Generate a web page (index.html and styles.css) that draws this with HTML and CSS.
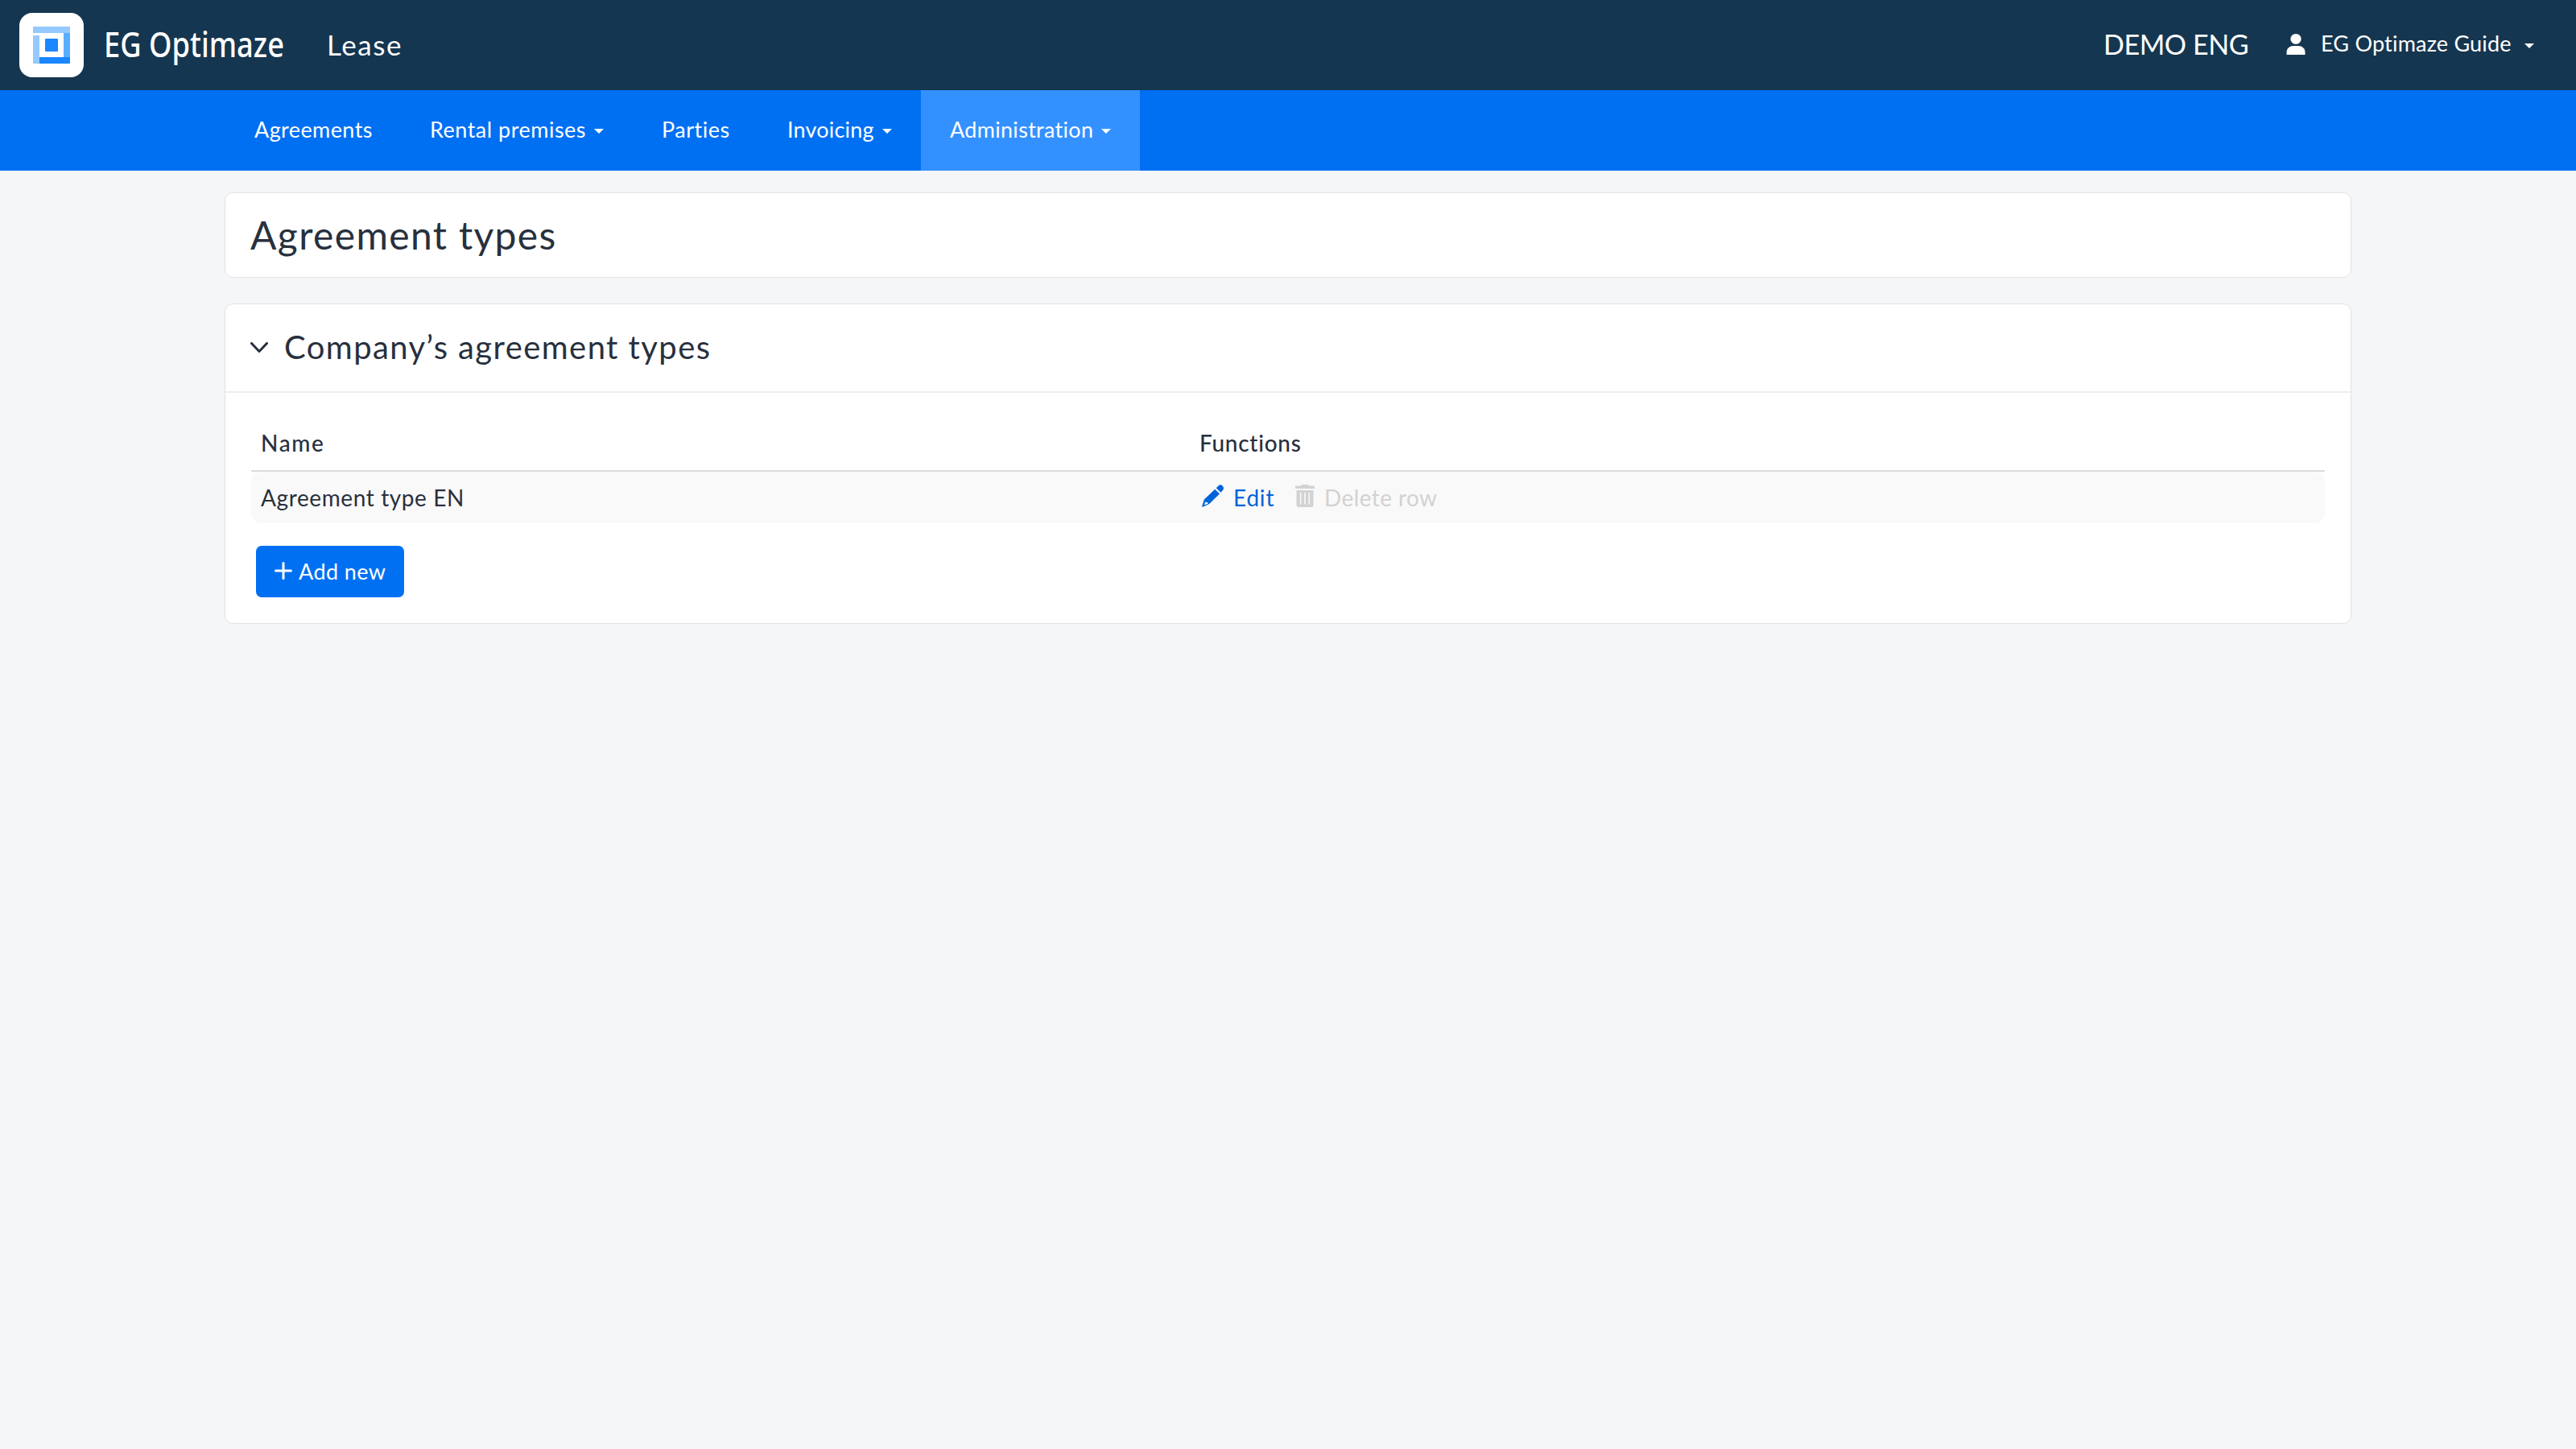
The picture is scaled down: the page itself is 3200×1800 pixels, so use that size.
FILE: index.html
```
<!DOCTYPE html>
<html lang="en">
<head>
    <meta charset="UTF-8">
    <meta name="viewport" content="width=device-width, initial-scale=1.0">
    <title>Agreement types</title>
    <link rel="stylesheet" href="styles.css">
</head>
<body>
    <header class="topbar">
        <svg class="logo" viewBox="0 0 80 80">
            <rect width="80" height="80" rx="16" fill="#fff"/>
            <path d="M18 17h44a1 1 0 0 1 1 1v7H17v-7a1 1 0 0 1 1-1zM18 28h7v35h-7a1 1 0 0 1-1-1V29a1 1 0 0 1 1-1z" fill="#94caff"/>
            <path d="M55 25h8v30h-8z" fill="#5aaeff"/>
            <path d="M25 55h38v7a1 1 0 0 1-1 1H25z" fill="#1a86ff"/>
            <rect x="32" y="32" width="16" height="16" rx="1" fill="#1a86ff"/>
        </svg>
        <svg class="brand" viewBox="0 0 222 60">
            <text x="-1" y="45.3" textLength="224" lengthAdjust="spacingAndGlyphs">EG Optimaze</text>
        </svg>
        <span class="product">Lease</span>
        <span class="company">DEMO ENG</span>
        <svg class="user-icon" viewBox="0 0 24 26">
            <ellipse cx="12" cy="6.4" rx="6.6" ry="6.4"/>
            <path d="M.5 26v-3c0-5 4-8 8.500-8h6c4.500 0 8.500 3 8.500 8v3z"/>
        </svg>
        <span class="user-name">EG Optimaze Guide</span>
        <i class="caret"></i>
    </header>

    <nav class="menu">
        <a class="agreements"><span>Agreements</span></a>
        <a class="premises"><span>Rental premises</span><i class="caret"></i></a>
        <a class="parties"><span>Parties</span></a>
        <a class="invoicing"><span>Invoicing</span><i class="caret"></i></a>
        <a class="administration active"><span>Administration</span><i class="caret"></i></a>
    </nav>

    <main class="container">
        <div class="card page-title">
            <h1>Agreement types</h1>
        </div>

        <section class="card">
            <div class="card-header">
                <svg class="chevron" viewBox="0 0 22 14"><path d="M1.500 1.500 11 11.500l9.500-10"/></svg>
                <h2>Company’s agreement types</h2>
            </div>
            <div class="card-body">
                <div class="row head">
                    <div class="name">Name</div>
                    <div>Functions</div>
                </div>
                <div class="row item">
                    <div class="type">Agreement type EN</div>
                    <div class="functions">
                        <a class="edit">
                            <svg viewBox="0 0 28 28">
                                <path d="M20.500 1.500c1.700-1.700 3.500-1.400 5 0 1.600 1.600 2.200 3.500.5 5.500l-2.500 2.800-5.700-5.600z"/>
                                <path fill-rule="evenodd" d="M16.300 5.700 22 11.400 9.200 24.100 1 27.700c-.7.200-1-.2-.8-.8L2.800 18.500zM4.300 21.300l-1.300 3.900 4.600-1.500-.5-1.600-1.900-.2z"/>
                            </svg>
                            <span>Edit</span>
                        </a>
                        <a class="delete">
                            <svg viewBox="0 0 26 28">
                                <path d="M8 1.500C8.200.5 9 0 10 0h6c1 0 1.800.5 2 1.500h5.500c1 0 1.500.6 1.500 1.500v2H1V3c0-.9.500-1.500 1.500-1.500z"/>
                                <path fill-rule="evenodd" d="M2.500 7h21v18c0 2-1 3-3 3h-15c-2 0-3-1-3-3zM7 10v14.500h1.500V10zM12.200 10v14.500h1.600V10zM17.500 10v14.500H19V10z"/>
                            </svg>
                            <span>Delete row</span>
                        </a>
                    </div>
                </div>
                <button type="button" class="add">
                    <svg viewBox="0 0 22 22"><path d="M11 1.500v19M1.500 11h19"/></svg>
                    <span>Add new</span>
                </button>
            </div>
        </section>
    </main>
</body>
</html>
```
FILE: styles.css
```
* {
    box-sizing: border-box;
}

body {
    margin: 0;
    background-color: #f5f6f8;
    color: #28303d;
    font-family: "Lato", sans-serif;
    font-size: 28px;
    line-height: 40px;
    white-space: nowrap;
}

h1, h2 {
    margin: 0;
    font-weight: 400;
}

.topbar {
    display: flex;
    align-items: center;
    height: 112px;
    padding: 0 52px 0 24px;
    background-color: #153650;
    color: #fff;
}

.logo {
    width: 80px;
    height: 80px;
}

.brand {
    width: 222px;
    height: 60px;
    margin-left: 26px;
    overflow: visible;
    fill: #fff;
    font-family: "Noto Sans", sans-serif;
    font-size: 43px;
    font-weight: 500;
}

.product {
    margin-left: 54px;
    padding-bottom: 2px;
    font-size: 35px;
    letter-spacing: 1.6px;
}

.company {
    width: 181px;
    margin-left: auto;
    padding-bottom: 2px;
    font-size: 34px;
    letter-spacing: -0.4px;
}

.user-icon {
    width: 24px;
    height: 26px;
    margin: 0 19px 2px 46px;
    fill: #fff;
}

.user-name {
    width: 238px;
    padding-bottom: 4px;
    font-size: 27px;
    letter-spacing: 0.2px;
}

.caret {
    border: 6px solid transparent;
    border-top-color: currentColor;
    border-bottom: 0;
    margin-top: 2px;
}

.topbar .caret {
    margin-left: 15px;
}

.menu {
    display: flex;
    height: 100px;
    padding-left: 280px;
    background-color: #0070f3;
    color: #fff;
    font-size: 27px;
    letter-spacing: 0.5px;
}

.menu a {
    display: flex;
    align-items: center;
    justify-content: space-between;
    padding: 0 36px;
}

.menu span {
    padding-bottom: 3px;
}

.agreements {
    width: 218px;
    letter-spacing: 0.4px;
}

.premises {
    width: 288px;
}

.parties {
    width: 156px;
}

.invoicing {
    width: 202px;
    letter-spacing: 0.2px;
}

.administration {
    width: 272px;
    letter-spacing: 0.3px;
}

.menu .active {
    background-color: #3391ff;
}

.container {
    padding: 27px 279px 0;
}

.card {
    background-color: #fff;
    border: 1px solid #e1e2e6;
    border-radius: 10px;
}

.page-title {
    height: 106px;
    margin-bottom: 32px;
    padding: 0 31px;
}

h1 {
    font-size: 48px;
    line-height: 104px;
    letter-spacing: 1.35px;
}

.card-header {
    display: flex;
    align-items: center;
    height: 110px;
    padding: 0 31px;
    border-bottom: 2px solid #eee;
}

.chevron {
    width: 22px;
    height: 14px;
    margin-right: 20px;
    fill: none;
    stroke: #28303d;
    stroke-width: 3;
    stroke-linecap: round;
    stroke-linejoin: round;
}

h2 {
    padding-bottom: 2px;
    font-size: 40px;
    letter-spacing: 1.42px;
}

.card-body {
    padding: 30px 32px 32px;
}

.row {
    display: grid;
    grid-template-columns: 1166px 1fr;
    align-items: center;
    padding-left: 12px;
}

.head {
    height: 68px;
    padding-bottom: 3px;
    border-bottom: 2px solid #dcdcdc;
    font-weight: 500;
    letter-spacing: 0.7px;
}

.name {
    letter-spacing: 1.6px;
}

.item {
    height: 64px;
    background-color: #f9f9f9;
    border-radius: 12px;
    letter-spacing: 0.6px;
}

.type, .functions span {
    padding-bottom: 1px;
}

.functions, .functions a {
    display: flex;
    align-items: center;
}

.functions svg {
    height: 28px;
    margin-bottom: 4px;
    fill: currentColor;
}

.edit {
    margin-left: 3px;
    color: #0064d9;
}

.edit svg {
    width: 28px;
    margin-right: 11px;
}

.edit span {
    width: 50px;
    letter-spacing: 0.8px;
}

.delete {
    margin-left: 26px;
    color: #d2d2d2;
}

.delete svg {
    width: 26px;
    margin-right: 11px;
}

.delete span {
    letter-spacing: 0.4px;
}

.add {
    display: flex;
    align-items: center;
    width: 184px;
    height: 64px;
    margin: 28px 0 0 6px;
    padding: 0 0 0 23px;
    border: 0;
    border-radius: 7px;
    background-color: #0070f3;
    color: #fff;
    font: inherit;
    font-size: 27px;
    letter-spacing: 0.4px;
}

.add svg {
    width: 22px;
    height: 22px;
    margin: 0 8px 2px 0;
    fill: none;
    stroke: #fff;
    stroke-width: 3;
    stroke-linecap: round;
}
```
